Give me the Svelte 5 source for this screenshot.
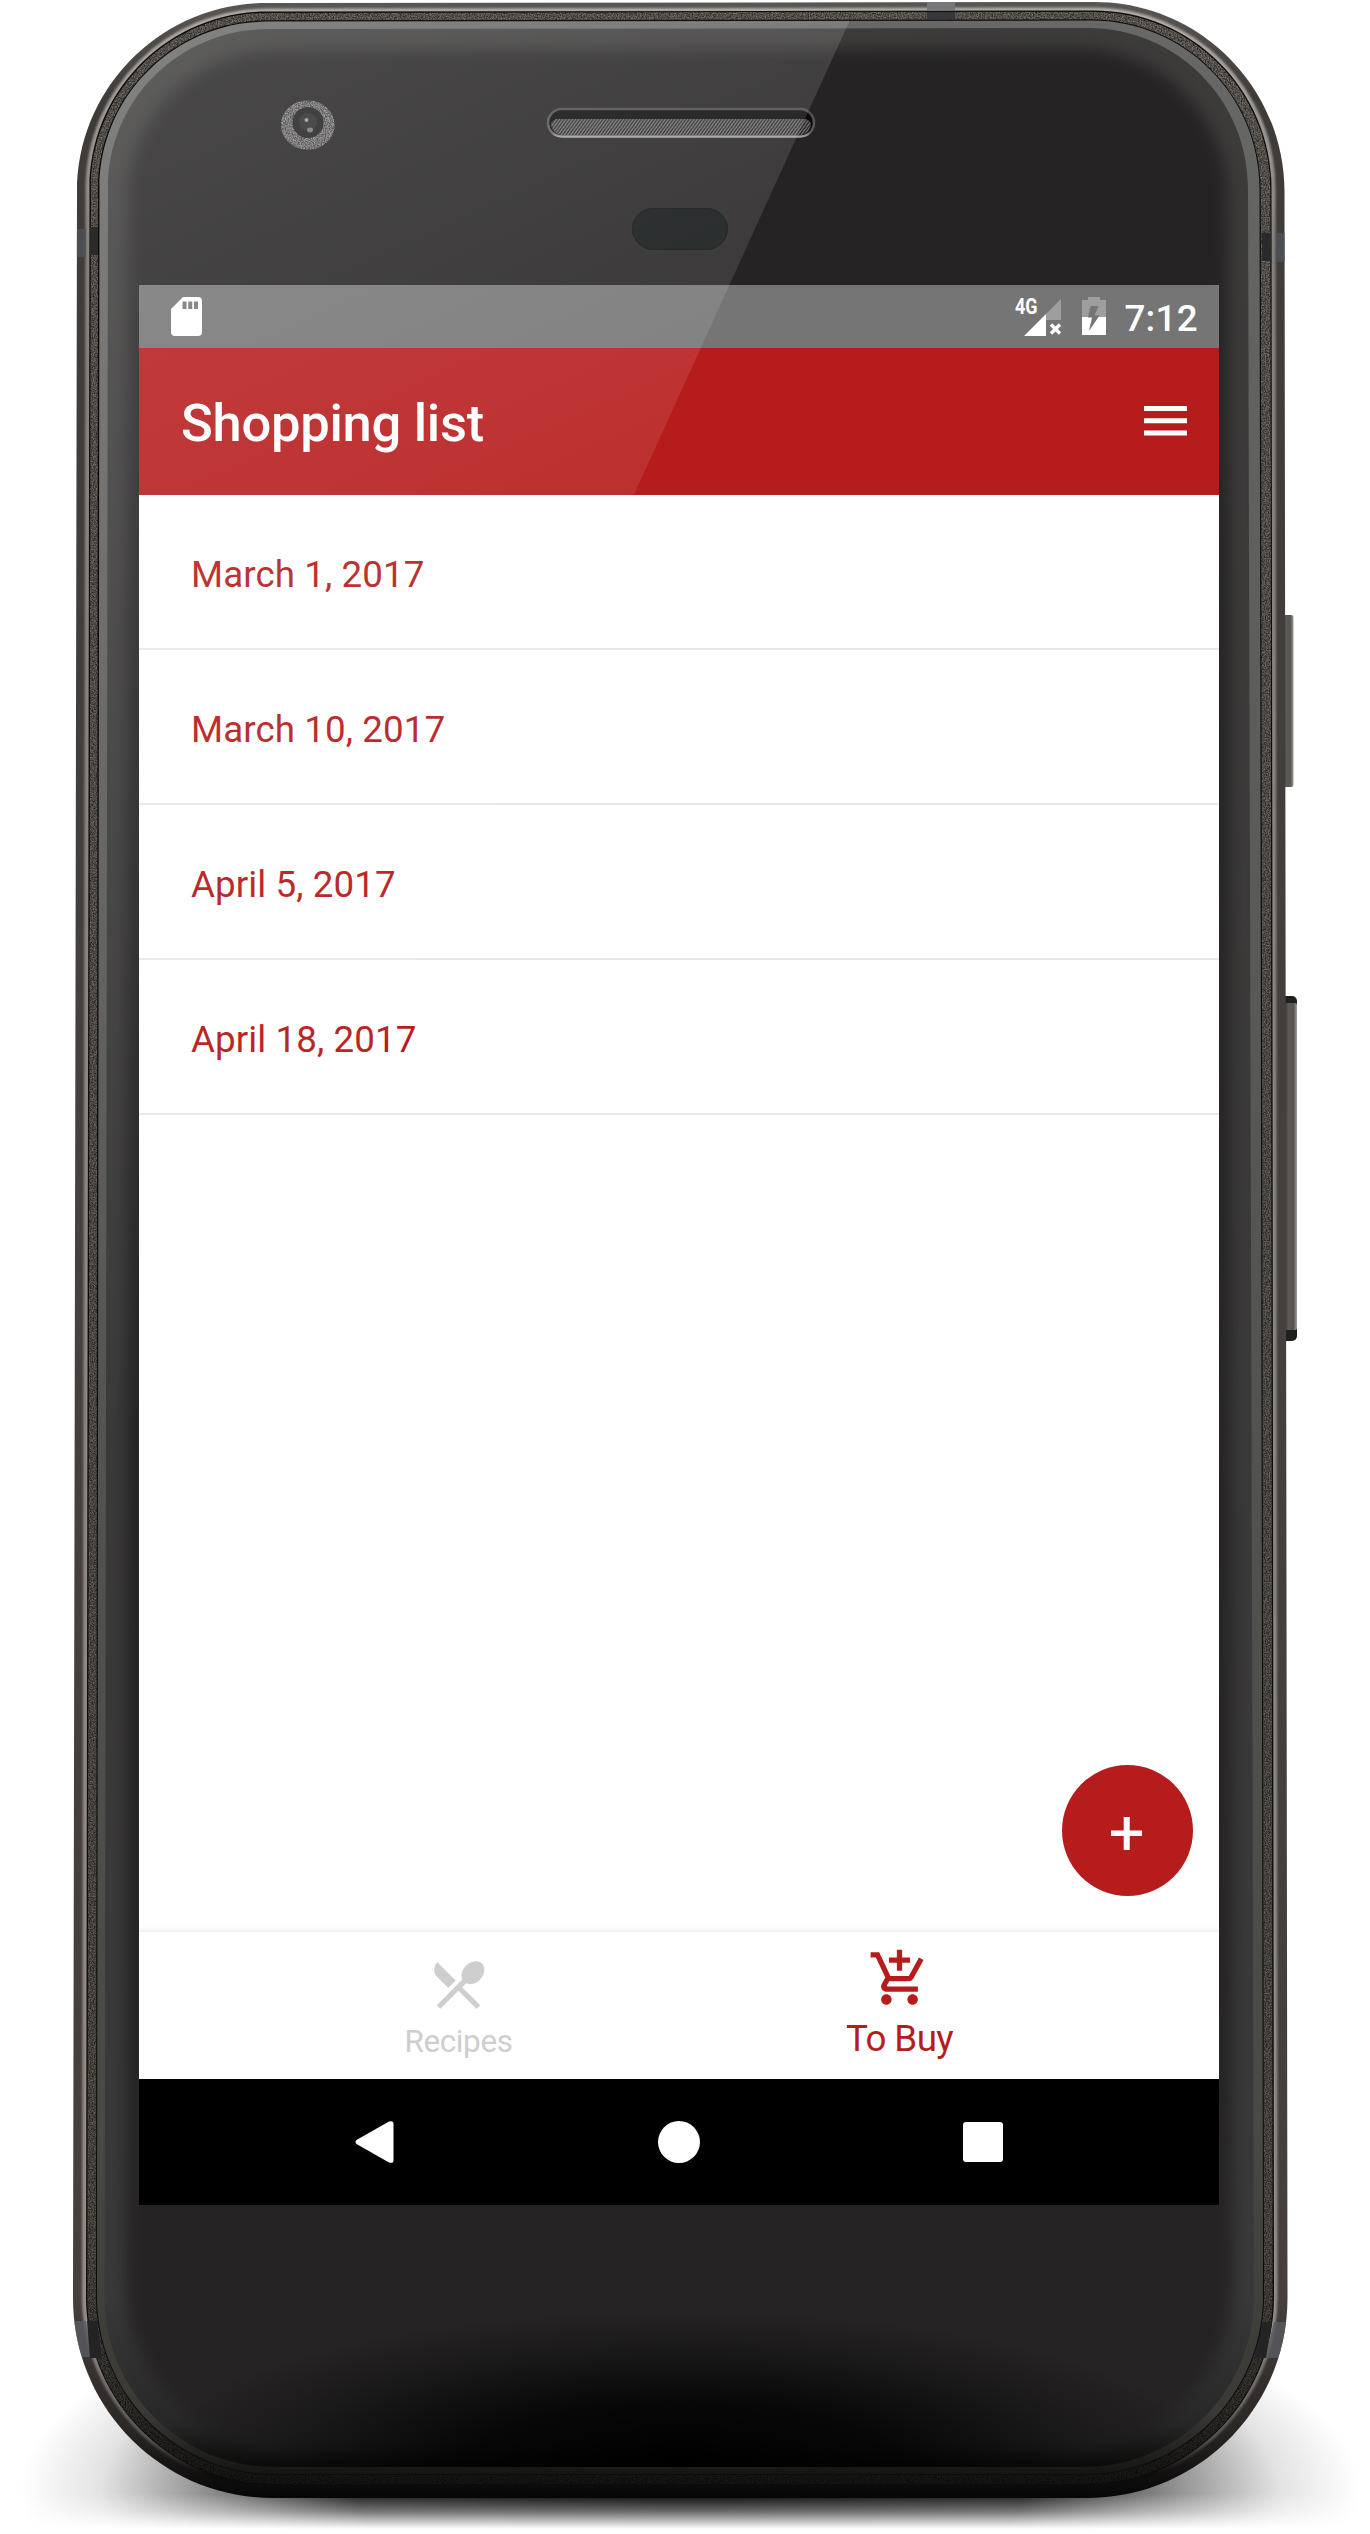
<script>
  const lists = ['March 1, 2017', 'March 10, 2017', 'April 5, 2017', 'April 18, 2017'];

  // Outline of one layer of the case; sides flare out slightly toward the bottom.
  function shell(lt, rt, lb, rb, top, bottom, r, rbm) {
    const k = 0.4477;
    return [
      `M${lt + r} ${top + 1}`,
      `L${rt - r} ${top}`,
      `C${rt - r * k} ${top} ${rt} ${top + r * k} ${rt} ${top + r}`,
      `L${rb} ${bottom - rbm}`,
      `C${rb} ${bottom - rbm * k} ${rb - rbm * k} ${bottom} ${rb - rbm} ${bottom}`,
      `L${lb + rbm} ${bottom}`,
      `C${lb + rbm * k} ${bottom} ${lb} ${bottom - rbm * k} ${lb} ${bottom - rbm}`,
      `L${lt} ${top + r}`,
      `C${lt} ${top + r * k} ${lt + r * k} ${top + 1} ${lt + r} ${top + 1}Z`
    ].join('');
  }

  const outer = shell(77, 1284.5, 73, 1287.5, 2, 2498, 190, 200);
  const shine = shell(87, 1274, 83.5, 1276, 9, 2486, 180, 190);
  const seam = shell(89.5, 1271.5, 86, 1274, 10.5, 2485, 178, 188);
  const grain = shell(90.7, 1270.5, 87.2, 1272.7, 11.7, 2484, 177, 186);
  const groove = shell(98, 1260.7, 96, 1264, 19.3, 2475, 170, 179);
  const rim = shell(99.5, 1259.5, 97, 1263, 20.6, 2474, 168, 178);
  const glass = shell(108, 1248, 104.5, 1254, 28, 2467, 160, 170);
</script>

<div class="stage">
  <svg class="case" viewBox="0 0 1370 2534" aria-hidden="true">
    <defs>
      <radialGradient id="floor" gradientUnits="userSpaceOnUse" cx="0" cy="0" r="1"
        gradientTransform="translate(690 2490) scale(670 225)">
        <stop offset="0" stop-color="#000" />
        <stop offset=".5" stop-color="#000" stop-opacity=".9" />
        <stop offset=".65" stop-color="#000" stop-opacity=".58" />
        <stop offset=".77" stop-color="#000" stop-opacity=".34" />
        <stop offset=".88" stop-color="#000" stop-opacity=".11" />
        <stop offset="1" stop-color="#000" stop-opacity="0" />
      </radialGradient>
      <linearGradient id="floorFade" x1="0" y1="0" x2="0" y2="1">
        <stop offset="0" stop-color="#fff" />
        <stop offset=".88" stop-color="#fff" />
        <stop offset=".94" stop-color="#fff" stop-opacity=".6" />
        <stop offset="1" stop-color="#fff" stop-opacity="0" />
      </linearGradient>
      <mask id="floorMask" maskUnits="userSpaceOnUse" x="0" y="2234" width="1370" height="300">
        <rect x="0" y="2234" width="1370" height="295" fill="url(#floorFade)" />
      </mask>
      <linearGradient id="metal" gradientUnits="userSpaceOnUse" x1="0" y1="0" x2="0" y2="2500">
        <stop offset="0" stop-color="#5a5654" />
        <stop offset=".04" stop-color="#3f3b39" />
        <stop offset=".5" stop-color="#45403d" />
        <stop offset=".92" stop-color="#463f3c" />
        <stop offset=".97" stop-color="#2c2826" />
        <stop offset="1" stop-color="#050505" />
      </linearGradient>
      <linearGradient id="shineFill" gradientUnits="userSpaceOnUse" x1="0" y1="0" x2="0" y2="2500">
        <stop offset="0" stop-color="#b2aeaa" />
        <stop offset=".1" stop-color="#85827e" />
        <stop offset=".93" stop-color="#928d89" />
        <stop offset=".975" stop-color="#5a5653" />
        <stop offset=".99" stop-color="#0c0c0b" />
      </linearGradient>
      <linearGradient id="grainFill" gradientUnits="userSpaceOnUse" x1="0" y1="0" x2="0" y2="2500">
        <stop offset="0" stop-color="#56524d" />
        <stop offset=".9" stop-color="#45413d" />
        <stop offset=".96" stop-color="#2b2926" />
        <stop offset="1" stop-color="#0d0d0c" />
      </linearGradient>
      <linearGradient id="rimFill" gradientUnits="userSpaceOnUse" x1="0" y1="0" x2="0" y2="2500">
        <stop offset="0" stop-color="#686866" />
        <stop offset=".3" stop-color="#5c5c5a" />
        <stop offset=".85" stop-color="#494946" />
        <stop offset=".965" stop-color="#3a3935" />
        <stop offset=".99" stop-color="#141413" />
      </linearGradient>
      <linearGradient id="edgeFill" gradientUnits="userSpaceOnUse" x1="0" y1="0" x2="0" y2="2500">
        <stop offset="0" stop-color="#3d3c3b" />
        <stop offset=".92" stop-color="#3a3939" />
        <stop offset=".97" stop-color="#292828" />
        <stop offset=".985" stop-color="#111110" />
      </linearGradient>
      <radialGradient id="chin" gradientUnits="userSpaceOnUse" cx="0" cy="0" r="1"
        gradientTransform="translate(680 2465) scale(540 155)">
        <stop offset="0" stop-color="#000" />
        <stop offset=".4" stop-color="#000" stop-opacity=".8" />
        <stop offset=".75" stop-color="#000" stop-opacity=".28" />
        <stop offset="1" stop-color="#000" stop-opacity="0" />
      </radialGradient>
      <linearGradient id="keyFill" x1="0" y1="0" x2="1" y2="0">
        <stop offset="0" stop-color="#2c2927" />
        <stop offset=".4" stop-color="#5e5a56" />
        <stop offset=".75" stop-color="#57534f" />
        <stop offset="1" stop-color="#a09c9a" />
      </linearGradient>
      <linearGradient id="slotFill" x1="0" y1="0" x2="0" y2="1">
        <stop offset="0" stop-color="#4b494a" />
        <stop offset=".85" stop-color="#5d5c5c" />
        <stop offset="1" stop-color="#a0a0a0" />
      </linearGradient>
      <pattern id="mesh" width="3.2" height="4.4" patternUnits="userSpaceOnUse">
        <rect width="3.2" height="4.4" fill="#262525" />
        <path d="M-1.600 2.200L1.600 -2.200M-1.600 6.600L4.800 -2.200M0 8.800L6.400 0" stroke="#85817e" stroke-width="1.1" />
      </pattern>
      <filter id="speckle" x="0" y="0" width="1" height="1" color-interpolation-filters="sRGB">
        <feTurbulence type="fractalNoise" baseFrequency=".75" numOctaves="2" seed="3" result="n" />
        <feColorMatrix in="n" type="matrix"
          values="2 0 0 0 -.5  2 0 0 0 -.5  2 0 0 0 -.5  0 0 0 0 1" result="g" />
        <feComposite in="SourceGraphic" in2="g" operator="arithmetic" k1=".9" k2=".5" k3="0" k4="0" result="m" />
        <feComposite in="m" in2="SourceGraphic" operator="in" result="p" />
        <feMerge>
          <feMergeNode in="p" />
          <feMergeNode in="p" />
        </feMerge>
      </filter>
      <filter id="soft" x="-.1" y="-.1" width="1.2" height="1.2" color-interpolation-filters="sRGB">
        <feGaussianBlur stdDeviation="8" />
      </filter>
      <filter id="thin" color-interpolation-filters="sRGB"><feGaussianBlur stdDeviation="1.2" /></filter>
      <clipPath id="glassClip"><path d={glass} /></clipPath>
      <clipPath id="outerClip"><path d={outer} /></clipPath>
    </defs>

    <rect x="0" y="2234" width="1370" height="300" fill="url(#floor)" mask="url(#floorMask)" />

    <rect x="1281" y="615" width="12.5" height="172" rx="2.5" fill="url(#keyFill)" />
    <rect x="1281" y="996" width="16" height="345" rx="5" fill="#211f1e" />
    <rect x="1283" y="1003" width="14" height="327" rx="2" fill="url(#keyFill)" />

    <path d={outer} fill="url(#metal)" />
    <path d={shine} fill="url(#shineFill)" stroke="url(#shineFill)" stroke-width="3" filter="url(#thin)" clip-path="url(#outerClip)" />
    <path d={seam} fill="#0d0c0b" />
    <path d={grain} fill="url(#grainFill)" filter="url(#speckle)" />
    <g clip-path="url(#outerClip)">
      <path d="M70 229h16v28H70zM1276 233h14v29h-14z" fill="#4e5156" opacity=".85" />
      <path d="M90 227h8v28h-8zM1262 233h9v28h-9z" fill="#2b2b2c" />
      <path d="M927 0h28v10h-28z" fill="#77777b" />
      <path d="M927 12h28v7h-28z" fill="#37363a" />
      <path d="M72 2321h14l6 36H76zM1274 2322h14l-5 36h-18z" fill="#5a5b61" opacity=".8" />
      <path d="M87 2321h10l5 37H90zM1262 2322h10l-6 36h-12z" fill="#242425" />
    </g>
    <path d={groove} fill="#0d0c0b" />
    <path d={rim} fill="url(#rimFill)" />
    <path d={glass} fill="url(#edgeFill)" />
    <g clip-path="url(#glassClip)">
      <path d={shell(128, 1228, 126, 1233, 49, 2450, 150, 165)} fill="#252324" filter="url(#soft)" />
      <ellipse cx="680" cy="2465" rx="540" ry="155" fill="url(#chin)" />
    </g>

    <rect x="548" y="109" width="266" height="27.5" rx="13.7" fill="#0c0b0b" stroke="url(#slotFill)" stroke-width="2.5" />
    <path d="M556 119H806a14 14 0 0 1 5 4a12 12 0 0 1-11 12H562a12 12 0 0 1-11-12a14 14 0 0 1 5-4z" fill="url(#mesh)" />
    <rect x="632.500" y="208.500" width="95" height="41" rx="20.500" fill="#111415" stroke="#0b0c0c" />
    <ellipse cx="307.8" cy="125" rx="27" ry="24.8" fill="#6a6869" filter="url(#speckle)" />
    <circle cx="308" cy="122.5" r="15.5" fill="#201f1f" />
    <circle cx="308" cy="122" r="9" fill="#2c2b2b" />
    <circle cx="306.5" cy="120" r="2" fill="#999" />
    <ellipse cx="310" cy="130" rx="3" ry="2.4" fill="#777775" />
  </svg>

  <main class="screen">
    <div class="status">
      <svg class="sd" viewBox="0 0 31 39">
        <path fill="#fff" fill-rule="evenodd" d="M12 0H27a4 4 0 0 1 4 4V35a4 4 0 0 1-4 4H4a4 4 0 0 1-4-4V12zM11.5 4.500v7.500h4V4.500zM17.300 4.500v7.500h4V4.500zM23 4.500v7.500h4V4.500z" />
      </svg>
      <div class="right">
        <svg class="signal" viewBox="0 0 46 40">
          <path d="M46 2V23H31V17z" fill="#9e9e9e" />
          <path d="M31 17V39H9z" fill="#fff" />
          <path d="M36 27.500l9 9M45 27.500l-9 9" stroke="#fff" stroke-width="3.400" />
          <text x="0" y="17" textLength="22.500" lengthAdjust="spacingAndGlyphs">4G</text>
        </svg>
        <svg class="battery" viewBox="0 0 24 38">
          <path d="M6 0H18V3H24V20H0V3H6z" fill="#9e9e9e" />
          <path d="M0 20H24V38H0z" fill="#fff" />
          <path d="M8.500 9h8l-4 9.500h5L7 34l3-13.500H6z" fill="#757575" />
        </svg>
        <span class="time">7:12</span>
      </div>
    </div>

    <header>
      <h1>Shopping list</h1>
      <svg class="menu" viewBox="0 0 43 30"><path fill="#fff" d="M0 0H43V5H0zM0 12.300H43V17.300H0zM0 24.500H43V29.500H0z" /></svg>
    </header>

    <section>
      <ul>
        {#each lists as name}
          <li>{name}</li>
        {/each}
      </ul>
      <button class="fab" aria-label="Add list">
        <svg viewBox="0 0 31 33"><path fill="#fff" d="M12.700 0h6v13.500H31v5.500H18.700V33h-6V19H0v-5.500H12.700z" /></svg>
      </button>
    </section>

    <nav class="tabs">
      <div class="tab">
        <svg viewBox="0 0 24 24"><path d="M8.100 13.340l2.830-2.830L3.910 3.500c-1.560 1.560-1.560 4.090 0 5.660l4.190 4.180zm6.780-1.810c1.530.71 3.680.21 5.270-1.380 1.910-1.910 2.280-4.650.81-6.120-1.460-1.460-4.200-1.100-6.120.81-1.590 1.590-2.090 3.740-1.380 5.270L3.700 19.870l1.410 1.410L12 14.410l6.880 6.880 1.410-1.410L13.410 13l1.470-1.470z" /></svg>
        <span>Recipes</span>
      </div>
      <div class="tab active">
        <svg viewBox="0 0 24 24"><path d="M11 9h2V6h3V4h-3V1h-2v3H8v2h3v3zm-4 9c-1.100 0-1.990.9-1.990 2S5.900 22 7 22s2-.9 2-2-.9-2-2-2zm10 0c-1.100 0-1.990.9-1.990 2s.89 2 1.990 2 2-.9 2-2-.9-2-2-2zm-9.830-3.250l.03-.12.9-1.630h7.450c.75 0 1.410-.41 1.750-1.030l3.860-7.010L19.420 4h-.01l-1.100 2-2.760 5H8.530l-.13-.27L6.160 6l-.95-2-.94-2H1v2h2l3.600 7.590-1.350 2.450c-.16.28-.25.61-.25.960 0 1.100.9 2 2 2h12v-2H7.420c-.13 0-.25-.11-.25-.25z" /></svg>
        <span>To Buy</span>
      </div>
    </nav>

    <div class="system">
      <svg viewBox="0 0 42 42"><path fill="#fff" d="M2.500 19L35 .6Q39.500-1 39.500 3V39Q39.500 43 35 41.400L2.500 23Q.5 21 2.500 19z" /></svg>
      <svg viewBox="0 0 42 42"><circle cx="21" cy="21" r="21" fill="#fff" /></svg>
      <svg viewBox="0 0 42 42"><rect x="0" y="1" width="40" height="40" rx="3" fill="#fff" /></svg>
    </div>
  </main>

  <svg class="case" viewBox="0 0 1370 2534" aria-hidden="true">
    <defs>
      <linearGradient id="sheen" gradientUnits="userSpaceOnUse" x1="0" y1="0" x2="560" y2="1240">
        <stop offset="0" stop-color="#fff" stop-opacity=".185" />
        <stop offset=".45" stop-color="#fff" stop-opacity=".1" />
        <stop offset="1" stop-color="#fff" stop-opacity="0" />
      </linearGradient>
      <clipPath id="rimClip"><path d={rim} /></clipPath>
    </defs>
    <path d="M90 20H850L90 1690z" fill="url(#sheen)" clip-path="url(#rimClip)" />
  </svg>
</div>

<style>
  :global(body) {
    margin: 0;
    background: #fff;
  }
  .stage {
    position: relative;
    box-sizing: border-box;
    width: 1370px;
    height: 2534px;
    padding: 285px 151px 329px 139px;
    overflow: hidden;
    font-family: Roboto, 'Liberation Sans', sans-serif;
  }
  .case {
    position: absolute;
    inset: 0;
    width: 1370px;
    height: 2534px;
    pointer-events: none;
  }
  .screen {
    position: relative;
    display: flex;
    flex-direction: column;
    width: 1080px;
    height: 1920px;
    background: #fff;
  }
  svg {
    display: block;
    flex: none;
  }
  .status {
    display: flex;
    justify-content: space-between;
    height: 63px;
    padding: 0 21px 0 32px;
    box-sizing: border-box;
    background: #757575;
    color: #fff;
  }
  .sd {
    width: 31px;
    height: 39px;
    margin-top: 12px;
  }
  .right {
    display: flex;
    align-items: flex-start;
  }
  .signal {
    width: 46px;
    height: 40px;
    margin: 12px 21px 0 0;
    overflow: visible;
  }
  .signal text {
    font-size: 22px;
    font-weight: 700;
    fill: #fff;
  }
  .battery {
    width: 24px;
    height: 38px;
    margin: 12px 18.500px 0 0;
  }
  .time {
    font-size: 36.75px;
    line-height: 43px;
    font-weight: 500;
    letter-spacing: 0.3px;
    margin-top: 12px;
  }
  header {
    display: flex;
    align-items: center;
    justify-content: space-between;
    height: 147px;
    padding: 0 32px 0 42px;
    box-sizing: border-box;
    background: #b71c1c;
  }
  h1 {
    margin: 2px 0 0;
    font-size: 52.5px;
    line-height: 62px;
    font-weight: 500;
    letter-spacing: -0.27px;
    color: #fff;
  }
  .menu {
    width: 43px;
    height: 30px;
    margin-bottom: 1px;
  }
  section {
    position: relative;
    flex: 1;
  }
  ul {
    margin: 0;
    padding: 0;
    list-style: none;
  }
  li {
    display: flex;
    align-items: center;
    box-sizing: border-box;
    height: 155px;
    padding: 5px 0 0 52px;
    border-bottom: 2px solid #e8e8e8;
    font-size: 36.75px;
    letter-spacing: 0.08px;
    color: #b71c1c;
  }
  .fab {
    position: absolute;
    right: 26px;
    bottom: 36px;
    display: flex;
    justify-content: center;
    align-items: center;
    width: 131px;
    height: 131px;
    padding: 6px 2px 0 0;
    box-sizing: border-box;
    border: 0;
    border-radius: 50%;
    background: #b71c1c;
  }
  .fab svg {
    width: 31px;
    height: 33px;
  }
  .tabs {
    display: grid;
    grid-template-columns: 441px 441px;
    justify-content: center;
    height: 147px;
    background: #fff;
    box-shadow: 0 -2px 5px rgba(0, 0, 0, 0.08);
    clip-path: inset(-8px 0 0 0);
  }
  .tab {
    display: flex;
    flex-direction: column;
    align-items: center;
    padding-top: 21px;
    color: #cecece;
    font-size: 31.5px;
    line-height: 37px;
    letter-spacing: -0.4px;
  }
  .tab svg {
    width: 63px;
    height: 63px;
    fill: currentColor;
  }
  .tab span {
    margin-top: 7px;
  }
  .active {
    padding-top: 15px;
    color: #b71c1c;
    font-size: 36.75px;
    line-height: 43px;
    letter-spacing: -0.6px;
  }
  .system {
    display: grid;
    grid-template-columns: repeat(3, 304.5px);
    justify-content: center;
    align-items: center;
    justify-items: center;
    height: 126px;
    background: #000;
  }
  .system svg {
    width: 42px;
    height: 42px;
  }
</style>
